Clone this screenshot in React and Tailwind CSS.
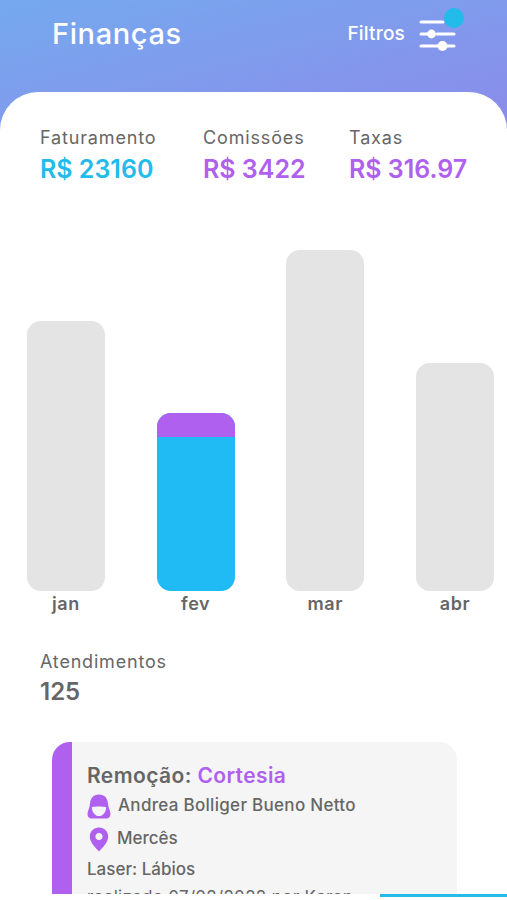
const font = { fontFamily: '"Inter", "Liberation Sans", sans-serif' };

const months = [
  { label: "jan", height: "h-[270px]" },
  { label: "fev", height: "h-[178px]", active: true },
  { label: "mar", height: "h-[341px]" },
  { label: "abr", height: "h-[228px]" },
];

function FilterIcon() {
  return (
    <svg width="38" height="32" viewBox="0 0 38 32" fill="none" stroke="white" strokeWidth="3" strokeLinecap="round">
      <path d="M2 3h22" />
      <path d="M2 15h8M18 15h17" />
      <path d="M2 27h17M28 27h7" />
      <circle cx="12.5" cy="15" r="4.4" fill="white" stroke="none" />
      <circle cx="23.5" cy="27" r="5" fill="white" stroke="none" />
    </svg>
  );
}

function WomanIcon() {
  return (
    <svg width="24" height="25" viewBox="0 0 24 25">
      <path d="M12 0.5C6.2 0.5 3.4 4.4 3 9.5C2.8 12.5 1.6 15.5 0.8 18C0 21 1 24 4 24.5H20C23 24 24 21 23.2 18C22.4 15.5 21.2 12.5 21 9.5C20.6 4.4 17.8 0.5 12 0.5Z" fill="#af60ef" />
      <path d="M4.8 13.2C8 12.4 16 12.4 19.2 13.2C19 18.2 16 22 12 22C8 22 5 18.2 4.8 13.2Z" fill="#f5f5f5" />
    </svg>
  );
}

function PinIcon() {
  return (
    <svg width="20" height="25" viewBox="0 0 20 25">
      <path fillRule="evenodd" d="M10 0.5C4.7 0.5 0.8 4.5 0.8 9.6C0.8 15.5 6.8 21.2 10 24.5C13.2 21.2 19.2 15.5 19.2 9.6C19.2 4.5 15.3 0.5 10 0.5ZM10 6C12 6 13.6 7.6 13.6 9.6C13.6 11.6 12 13.2 10 13.2C8 13.2 6.4 11.6 6.4 9.6C6.4 7.6 8 6 10 6Z" fill="#af60ef" />
    </svg>
  );
}

function Stat({ label, value, color, className }) {
  return (
    <div className={className}>
      <div className="text-[18px] leading-[22px] tracking-[0.85px] text-[#666666]">{label}</div>
      <div className={`mt-[4px] text-[25px] leading-[32px] font-semibold ${color}`}>{value}</div>
    </div>
  );
}

export default function App() {
  return (
    <div style={font} className="w-[507px] h-[900px] overflow-hidden bg-white flex flex-col">
      <div className="h-[894px] overflow-hidden shrink-0">
        <div className="h-[130px] bg-gradient-to-br from-[#74a9ef] to-[#8a8be9] flex items-start justify-between pl-[52px] pr-[50px] pt-[17px]">
          <h1 className="text-[29px] leading-[34px] font-medium text-white tracking-[0.6px]">Finanças</h1>
          <div className="flex items-start gap-[14px] relative">
            <span className="text-[19px] leading-[34px] font-medium tracking-[0.2px] text-white">Filtros</span>
            <div className="pt-[2px]">
              <FilterIcon />
            </div>
            <span className="absolute right-[-7px] top-[-9px] w-[20px] h-[20px] rounded-full bg-[#22bbea]" />
          </div>
        </div>

        <div className="bg-white rounded-t-[38px] -mt-[38px] pt-[35px]">
          <div className="flex pl-[40px]">
            <Stat className="w-[163px]" label="Faturamento" value="R$ 23160" color="text-[#22bbea]" />
            <Stat className="w-[146px]" label="Comissões" value="R$ 3422" color="text-[#af60ef]" />
            <Stat label="Taxas" value="R$ 316.97" color="text-[#af60ef]" />
          </div>

          <div className="mt-[65px] h-[341px] pl-[27px] pr-[13px] flex justify-between items-end">
            {months.map((m) => (
              <div
                key={m.label}
                className={`w-[78px] ${m.height} rounded-[14px] overflow-hidden ${m.active ? "bg-[#20baf5]" : "bg-[#e4e4e4]"}`}
              >
                {m.active && <div className="h-[24px] bg-[#af60ef]" />}
              </div>
            ))}
          </div>
          <div className="mt-[1px] pl-[27px] pr-[13px] flex justify-between">
            {months.map((m) => (
              <div key={m.label} className="w-[78px] text-center text-[18px] leading-[24px] tracking-[0.6px] font-semibold text-[#666666]">
                {m.label}
              </div>
            ))}
          </div>

          <div className="mt-[34px] pl-[40px]">
            <div className="text-[18px] leading-[24px] tracking-[0.8px] text-[#666666]">Atendimentos</div>
            <div className="mt-[2px] text-[24px] leading-[32px] font-semibold text-[#666666]">125</div>
          </div>

          <div className="mt-[34px] ml-[52px] w-[405px] h-[200px] rounded-[18px] overflow-hidden bg-[#f5f5f5] flex">
            <div className="w-[20px] bg-[#af60ef] shrink-0" />
            <div className="pl-[15px] pt-[21px] text-[#666666]">
              <div className="text-[21px] leading-[26px] tracking-[0.4px] font-semibold">
                Remoção: <span className="text-[#af60ef]">Cortesia</span>
              </div>
              <div className="flex items-center gap-[7px] mt-[4px] h-[26px]">
                <WomanIcon />
                <span className="text-[17px] tracking-[0.3px] font-medium">Andrea Bolliger Bueno Netto</span>
              </div>
              <div className="flex items-center gap-[8px] mt-[7px] h-[26px] pl-[2px]">
                <PinIcon />
                <span className="text-[17px] font-medium">Mercês</span>
              </div>
              <div className="text-[17px] leading-[24px] font-medium mt-[5px]">Laser: Lábios</div>
              <div className="text-[17px] leading-[22px] tracking-[0.3px] mt-[5px]">realizado 07/02/2022 por Karen</div>
            </div>
          </div>
        </div>
      </div>
      <div className="h-[3px] w-[127px] ml-auto bg-[#22bbea]" />
    </div>
  );
}
